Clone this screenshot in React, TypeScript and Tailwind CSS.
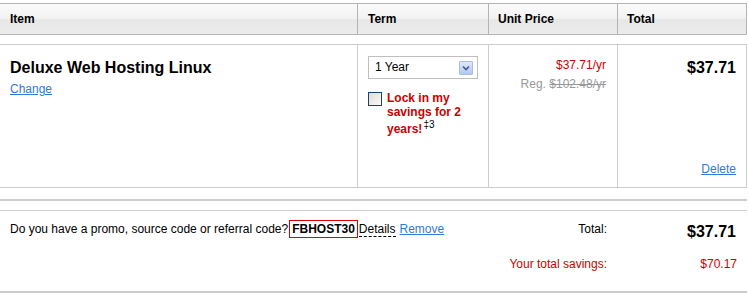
import React from "react";

const font = { fontFamily: "'Liberation Sans', Arial, sans-serif" };

function SelectArrow() {
  return (
    <span className="absolute right-[4px] top-[4px] flex h-[14px] w-[14px] items-center justify-center rounded-[1px] border border-[#a9bde6] bg-[linear-gradient(#dfe8fb,#b5c8f0)]">
      <svg width="8" height="6" viewBox="0 0 8 6">
        <path d="M1 1.5 L4 4.5 L7 1.5" fill="none" stroke="#3d5a94" strokeWidth="1.6" />
      </svg>
    </span>
  );
}

export default function App() {
  return (
    <div className="w-[748px] h-[298px] bg-white text-[12px] text-black" style={font}>
      <div className="pt-[3px]">
        {/* header */}
        <div className="flex h-[32px] w-[747px] border-y border-[#b4b4b4] bg-[linear-gradient(#fbfbfb,#f2f2f2_48%,#e7e7e7_52%,#ececec)] font-bold text-[12px]">
          <div className="flex w-[358px] items-center border-r border-[#b4b4b4] pl-[10px]">Item</div>
          <div className="flex w-[131px] items-center border-r border-[#b4b4b4] pl-[10px]">Term</div>
          <div className="flex w-[129px] items-center border-r border-[#b4b4b4] pl-[9px]">Unit Price</div>
          <div className="flex w-[129px] items-center border-r border-[#b4b4b4] pl-[9px]">Total</div>
        </div>

        {/* item row */}
        <div className="mt-[9px] flex h-[144px] w-[747px] border-y border-[#cccccc]">
          <div className="w-[358px] border-r border-[#cccccc] pl-[10px] pt-[13px]">
            <div className="text-[16px] font-bold leading-[19px]">Deluxe Web Hosting Linux</div>
            <a className="mt-[5px] block leading-[14px] text-[#2f7ad8] underline">Change</a>
          </div>
          <div className="w-[131px] border-r border-[#cccccc] pl-[10px] pt-[11px]">
            <div className="relative h-[23px] w-[110px] border border-[#bfbfbf] bg-white pl-[6px] text-[12px] leading-[21px]">
              1 Year
              <SelectArrow />
            </div>
            <div className="mt-[12px] flex gap-[5px]">
              <span className="mt-[1px] h-[14px] w-[14px] shrink-0 border border-[#1d416f] bg-[linear-gradient(135deg,#dcdcd6,#fbfbf8)]" />
              <div className="font-bold leading-[14px] text-[#cc0000]">
                <div>Lock in my</div>
                <div>savings for 2</div>
                <div className="mt-[3px] flex items-start">
                  <span>years!</span>
                  <span className="ml-[1px] -mt-[3px] text-[10px] font-normal leading-[12px] text-black">‡3</span>
                </div>
              </div>
            </div>
          </div>
          <div className="w-[129px] border-r border-[#cccccc] pr-[11px] pt-[13px] text-right">
            <div className="leading-[14px] text-[#cc0000]">$37.71/yr</div>
            <div className="mt-[5px] leading-[14px] text-[#999999]">
              Reg. <span className="line-through">$102.48/yr</span>
            </div>
          </div>
          <div className="flex w-[129px] flex-col items-end justify-between border-r border-[#cccccc] pb-[11px] pr-[10px] pt-[13px]">
            <div className="text-[16px] font-bold leading-[19px]">$37.71</div>
            <a className="leading-[14px] text-[#2f7ad8] underline">Delete</a>
          </div>
        </div>

        {/* divider */}
        <div className="mt-[11px] h-[2px] w-[747px] bg-[#cccccc]" />

        {/* promo row */}
        <div className="mt-[9px] h-[83px] w-[747px] border-t border-[#cccccc] border-b-2 border-b-[#cccccc]">
          <div className="flex items-start">
            <div className="flex w-[489px] items-center pl-[10px] pt-[9px] leading-[14px]">
              <span>Do you have a promo, source code or referral code?</span>
              <span className="ml-[1px] border border-[#e00000] px-[2px] py-[1px] font-bold">FBHOST30</span>
              <span className="ml-[1px] border-b border-dashed border-black">Details</span>
              <a className="ml-[4px] text-[#2f7ad8] underline">Remove</a>
            </div>
            <div className="grid w-[258px] grid-cols-[129px_129px] items-start pt-[11px]">
              <div className="pr-[11px] text-right leading-[14px]">Total:</div>
              <div className="pr-[11px] text-right text-[16px] font-bold leading-[19px]">$37.71</div>
              <div className="mt-[16px] pr-[11px] text-right leading-[14px] text-[#cc0000]">Your total savings:</div>
              <div className="mt-[16px] pr-[10px] text-right leading-[14px] text-[#cc0000]">$70.17</div>
            </div>
          </div>
        </div>
      </div>
    </div>
  );
}
